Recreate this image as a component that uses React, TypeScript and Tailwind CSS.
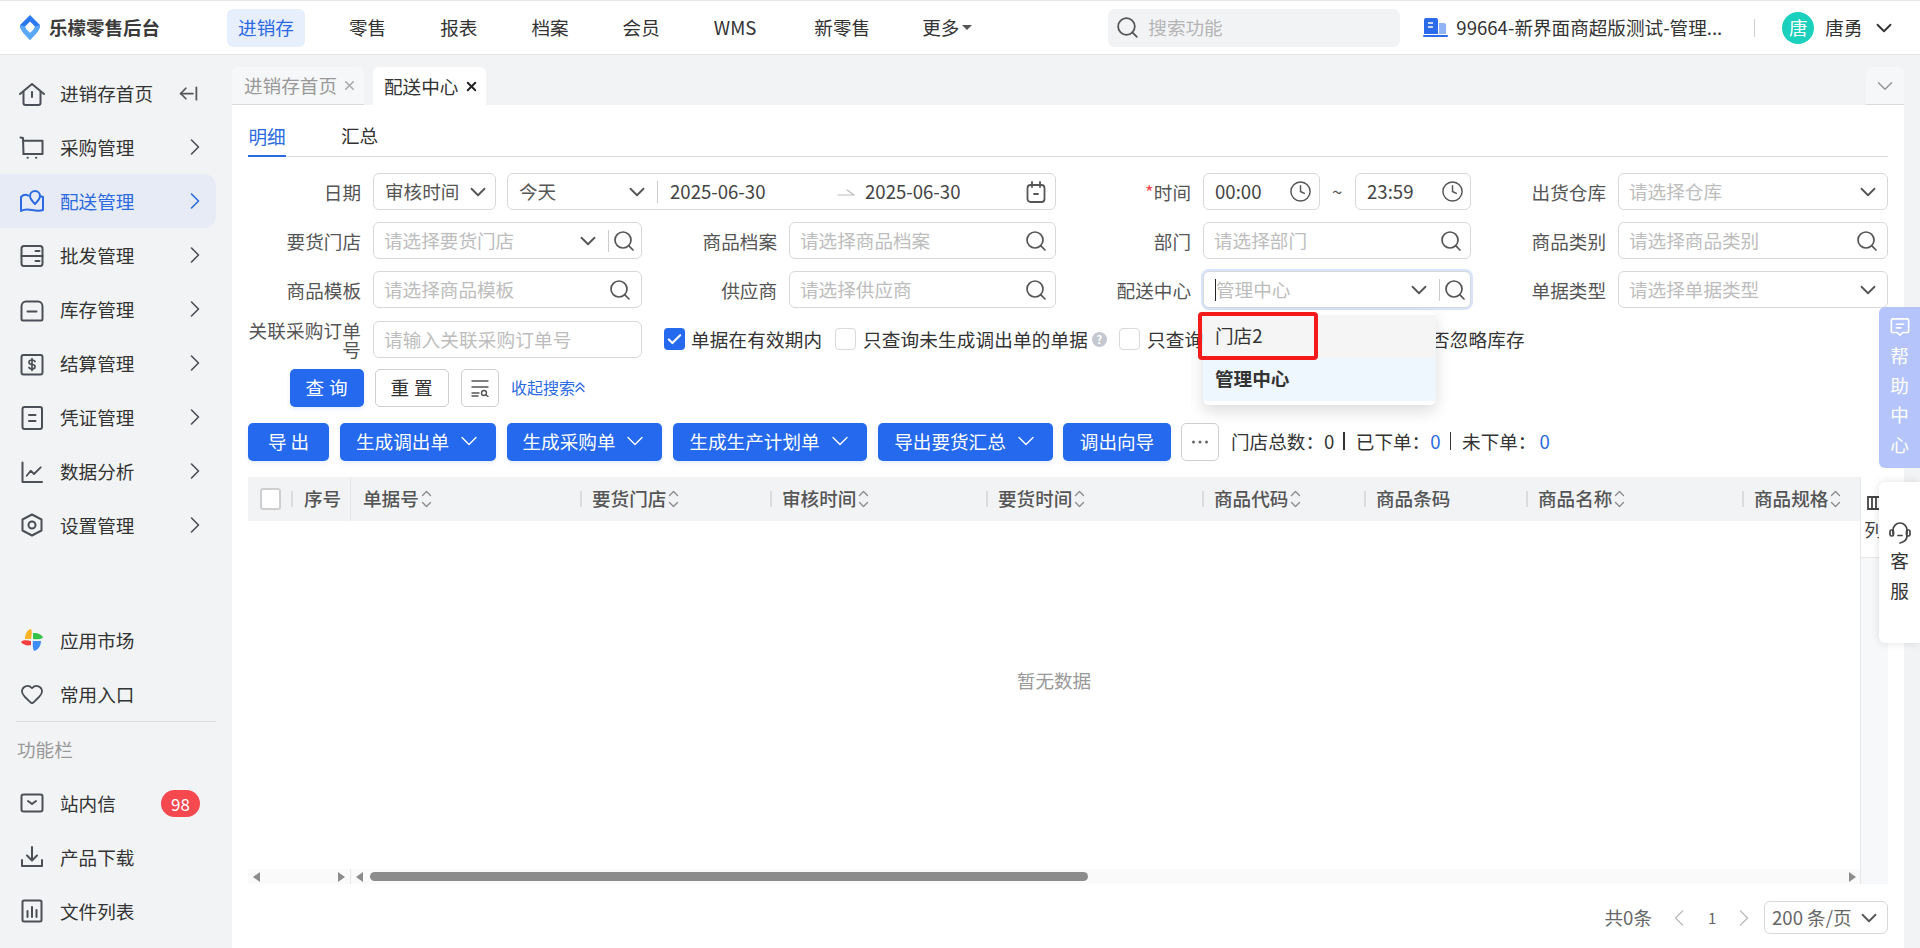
import {
  ArrowLeftFromLine,
  Check,
  ChevronDown,
  ChevronLeft,
  ChevronRight,
  Clock,
  Heart,
  Search,
  X,
} from "lucide-react";
import type { ReactNode } from "react";

const stroke = {
  fill: "none",
  stroke: "currentColor",
  strokeWidth: 2,
  strokeLinecap: "round" as const,
  strokeLinejoin: "round" as const,
};

function Ic({ children, className = "size-6 overflow-visible" }: { children: ReactNode; className?: string }) {
  return (
    <svg viewBox="0 0 24 24" className={className} {...stroke}>
      {children}
    </svg>
  );
}

const sideIcons: Record<string, ReactNode> = {
  home: (
    <Ic>
      <path d="M0 13 12 3l12 10" />
      <path d="M3.500 11v11a2 2 0 0 0 2 2h13a2 2 0 0 0 2-2V11" />
      <path d="M12 11v5" />
    </Ic>
  ),
  cart: (
    <Ic>
      <path d="m0.500 2.500 2.500.5 0.500 16" />
      <path d="M3 5.700h19.500V19H3.500" />
      <path d="M7.500 22.700h.3M16 22.700h.3" />
    </Ic>
  ),
  map: (
    <Ic>
      <path d="M8 6.500C5 5 3 6 1 8v14c3-2 6-2 11-1s8 1 11 0V8l-3-1" />
      <path d="M15 15c-3-3-5-5-5-8a5 5 0 0 1 10 0c0 3-2 5-5 8Z" />
    </Ic>
  ),
  wholesale: (
    <Ic>
      <rect x="1.500" y="3" width="21" height="20" rx="2.500" />
      <path d="M1.500 13h21M15.500 8h4M15.500 18h4" />
    </Ic>
  ),
  stock: (
    <Ic>
      <path d="M1.500 22V9.500c0-3 2-5 4.500-5h12c2.500 0 4.500 2 4.500 5V22a1.500 1.500 0 0 1-1.500 1.500H3A1.500 1.500 0 0 1 1.500 22Z" />
      <path d="M7.500 14.500h9" />
    </Ic>
  ),
  money: (
    <Ic>
      <rect x="1.500" y="4" width="21" height="19.500" rx="2" />
      <path d="M15 10.500c-.5-1-1.500-1.500-3-1.500-1.800 0-3 .8-3 2.300s1.200 2.200 3 2.200 3 .7 3 2.200-1.200 2.300-3 2.300c-1.500 0-2.500-.5-3-1.500M12 7.500v12" strokeWidth={1.700} />
    </Ic>
  ),
  voucher: (
    <Ic>
      <rect x="2.500" y="2" width="19.500" height="22" rx="2" />
      <path d="M9 10h6.500M9 16h6.500" />
    </Ic>
  ),
  chart: (
    <Ic>
      <path d="M2.500 3.500V23H22" />
      <path d="m6.700 16.700 4-5 3.300 3.300 6.700-6.700" strokeWidth={1.800} />
    </Ic>
  ),
  setting: (
    <Ic>
      <path d="M12 1.500 21.500 6.500v11L12 22.500 2.500 17.500v-11Z" />
      <circle cx="12" cy="12" r="3.500" />
    </Ic>
  ),
  mail: (
    <Ic>
      <rect x="1.500" y="3.500" width="21" height="17" rx="2" />
      <path d="m8 10 4 3 4-3" />
    </Ic>
  ),
  download: (
    <Ic>
      <path d="M12 2v13M7 10.500l5 5 5-5" />
      <path d="M2 15v6h20v-6" />
    </Ic>
  ),
  files: (
    <Ic>
      <rect x="2.500" y="1.500" width="19" height="21" rx="1.500" />
      <path d="M7.500 12v6M12 8v10M16.500 11v7" />
    </Ic>
  ),
};

function Pinwheel() {
  return (
    <svg viewBox="0 0 24 24" className="size-6">
      <path d="M11 11H5C5 6 7 2 11 1c1 2 1 6 0 10Z" fill="#fbb324" />
      <path d="M13 11V5c4-.5 9 1 10 5-3 1.500-7 1.500-10 1Z" fill="#35c24a" />
      <path d="M13 13h8c0 5-3 9-7 10-1.500-3-1.500-7-1-10Z" fill="#3d8ef7" />
      <path d="M11 13v4c-3 1-8 0-10-3 1-2 6-2 10-1Z" fill="#f5403f" />
    </svg>
  );
}

function Logo() {
  return (
    <svg viewBox="0 0 20 25" className="h-[25px] w-5">
      <path d="M10 0 20 10C20 16 14 20 10 25 6 20 0 16 0 10Z" fill="#2a78f2" />
      <path d="M0 10c0 6 6 10 10 15 4-5 10-9 10-15l-5 1.500C14 14.500 12 16 10 18c-2-2-4-3.500-5-6.500Z" fill="#5aa8f8" />
      <path d="M10 6.500 15 11.500C14 14.500 12 16 10 18 8 16 6 14.500 5 11.500Z" fill="#ffffff" />
    </svg>
  );
}

function SideItem({
  icon,
  label,
  active,
  chevron,
  children,
}: {
  icon: ReactNode;
  label: string;
  active?: boolean;
  chevron?: boolean;
  children?: ReactNode;
}) {
  return (
    <div
      className={[
        "flex h-[54px] w-[216px] items-center rounded-r-[12px] pl-5",
        active ? "bg-[#e6ebf5] text-[#2b6ae0]" : "text-[#4b4f56]",
      ].join(" ")}
    >
      <span className="flex w-10 shrink-0">{icon}</span>
      <span className={active ? "text-[#2b6ae0]" : "text-[#333]"}>{label}</span>
      {chevron ? <ChevronRight className="ml-auto mr-[7px] size-[28px]" strokeWidth={1.400} /> : null}
      {children}
    </div>
  );
}

function Box({
  className = "",
  children,
}: {
  className?: string;
  children: ReactNode;
}) {
  return (
    <div
      className={[
        "flex h-[37px] items-center rounded-[6px] border border-[#d6d8dc] bg-white",
        className,
      ].join(" ")}
    >
      {children}
    </div>
  );
}

function Ph({ children, className = "" }: { children: ReactNode; className?: string }) {
  return <span className={["pl-[10px] text-[#bdbdbd]", className].join(" ")}>{children}</span>;
}

function Label({ children }: { children: ReactNode }) {
  return (
    <div className="mr-3 w-[113px] shrink-0 text-right leading-[19px] text-[#555]">{children}</div>
  );
}

function SearchIcon({ className = "" }: { className?: string }) {
  return <Search className={["size-[24px] text-[#555]", className].join(" ")} strokeWidth={1.700} />;
}

function Down({ className = "" }: { className?: string }) {
  return <ChevronDown className={["size-[26px] text-[#555]", className].join(" ")} strokeWidth={1.700} />;
}

function TimeIcon() {
  return <Clock className="size-[23px] text-[#555]" strokeWidth={1.500} />;
}

function BtnDown() {
  return <ChevronDown className="size-[28px]" strokeWidth={1.200} />;
}

function Field({
  label,
  ml,
  children,
}: {
  label: ReactNode;
  ml?: string;
  children: ReactNode;
}) {
  return (
    <div className={["flex items-center", ml].join(" ")}>
      <Label>{label}</Label>
      {children}
    </div>
  );
}

function Btn({ className = "", children }: { className?: string; children: ReactNode }) {
  return (
    <div
      className={[
        "flex h-[38px] shrink-0 items-center justify-center rounded-[5px] bg-[#2469ee] pb-[2px] text-white shadow-[0_2px_4px_rgba(36,105,238,0.12)]",
        className,
      ].join(" ")}
    >
      {children}
    </div>
  );
}

function Tick({ checked }: { checked?: boolean }) {
  return checked ? (
    <span className="flex h-[22px] w-[21px] shrink-0 items-center justify-center rounded-[4px] bg-[#2469ee]">
      <Check className="size-[17px] text-white" strokeWidth={3} />
    </span>
  ) : (
    <span className="h-[22px] w-[21px] shrink-0 rounded-[4px] border border-[#d9d9d9] bg-white" />
  );
}

function Sort() {
  return (
    <svg viewBox="0 0 11 18" className="ml-[2px] h-[18px] w-[11px] text-[#8a8a8a]" {...stroke} strokeWidth={1.300}>
      <path d="m1.500 5.500 4-4 4 4M1.500 12.500l4 4 4-4" />
    </svg>
  );
}

const columns = [
  { label: "单据号", width: "w-[229px]", sort: true, first: true },
  { label: "要货门店", width: "w-[190px]", sort: true },
  { label: "审核时间", width: "w-[216px]", sort: true },
  { label: "要货时间", width: "w-[216px]", sort: true },
  { label: "商品代码", width: "w-[162px]", sort: true },
  { label: "商品条码", width: "w-[162px]", sort: false },
  { label: "商品名称", width: "w-[216px]", sort: true },
  { label: "商品规格", width: "w-[118px]", sort: true },
];

const nav = ["零售", "报表", "档案", "会员"];

const sideTop = [
  { key: "cart", label: "采购管理" },
  { key: "map", label: "配送管理", active: true },
  { key: "wholesale", label: "批发管理" },
  { key: "stock", label: "库存管理" },
  { key: "money", label: "结算管理" },
  { key: "voucher", label: "凭证管理" },
  { key: "chart", label: "数据分析" },
  { key: "setting", label: "设置管理" },
];

export default function App() {
  return (
    <div
      className="relative flex h-[948px] w-[1920px] flex-col overflow-hidden bg-[#f2f3f5] text-[18.600px] leading-none text-[#333]"
      style={{ fontFamily: '"Noto Sans CJK SC", "Noto Sans", sans-serif' }}
    >
      <header className="flex h-[55px] shrink-0 items-center border-y border-y-[#e3e4e6] border-t-[#e8e8e8] bg-white pl-5">
        <Logo />
        <span className="ml-[9px] w-[112px] whitespace-nowrap text-[18.500px] font-bold text-[#3a3a3a]">乐檬零售后台</span>
        <nav className="ml-[66px] flex items-center gap-[34px]">
          <span className="flex h-[38px] w-[78px] items-center justify-center rounded-[6px] bg-[#e8effc] text-[#2b6ae0]">进销存</span>
          {nav.map((item) => (
            <span key={item} className="mx-[10px]">{item}</span>
          ))}
          <span className="ml-[10px] mr-[14px]">WMS</span>
          <span className="mx-[10px]">新零售</span>
          <span className="ml-[8px] flex items-center">
            更多
            <span className="ml-[3px] h-0 w-0 border-x-[5px] border-t-[5px] border-x-transparent border-t-[#555]" />
          </span>
        </nav>
        <div className="ml-[136px] flex h-[38px] w-[292px] items-center rounded-[6px] bg-[#f2f3f5] pl-[7px]">
          <Search className="size-[25px] text-[#555]" strokeWidth={1.700} />
          <span className="ml-2 text-[#b5b5b5]">搜索功能</span>
        </div>
        <svg viewBox="0 0 25 19" className="ml-[23px] h-[19px] w-[25px]">
          <path d="M1 2a2 2 0 0 1 2-2h10a2 2 0 0 1 2 2v14H1Z" fill="#2b6ae8" />
          <path d="M5 5h5M5 9h5" stroke="#fff" strokeWidth="1.500" />
          <path d="M16 5h5a2 2 0 0 1 2 2v9h-7Z" fill="#8fb3f5" />
          <rect x="0" y="17" width="25" height="2" rx="1" fill="#2b6ae8" />
        </svg>
        <span className="ml-2 w-[268px] whitespace-nowrap">99664-新界面商超版测试-管理...</span>
        <span className="ml-[30px] h-[18px] w-px bg-[#ccc]" />
        <span className="ml-[27px] flex size-8 items-center justify-center rounded-full bg-[#1bd0bd] text-white">唐</span>
        <span className="ml-[11px]">唐勇</span>
        <ChevronDown className="ml-2 size-[26px] text-[#333]" strokeWidth={1.700} />
      </header>

      <div className="flex min-h-0 flex-1">
        <aside className="w-[232px] shrink-0 pt-[11px]">
          <SideItem icon={sideIcons.home} label="进销存首页">
            <ArrowLeftFromLine className="ml-[25px] size-[21px] text-[#555]" strokeWidth={2} />
          </SideItem>
          {sideTop.map((item) => (
            <SideItem key={item.key} icon={sideIcons[item.key]} label={item.label} active={item.active} chevron />
          ))}
          <div className="h-[61px]" />
          <SideItem icon={<Pinwheel />} label="应用市场" />
          <SideItem icon={<Heart className="size-6" strokeWidth={1.800} />} label="常用入口" />
          <div className="ml-4 h-px w-[200px] bg-[#d9dadc]" />
          <div className="flex h-[54px] items-center pl-[17px] text-[#999]">功能栏</div>
          <SideItem icon={sideIcons.mail} label="站内信">
            <span className="ml-auto mr-4 flex h-[27px] w-[39px] items-center justify-center rounded-full bg-[#f5484f] text-[17px] text-white">98</span>
          </SideItem>
          <SideItem icon={sideIcons.download} label="产品下载" />
          <SideItem icon={sideIcons.files} label="文件列表" />
        </aside>

        <main className="flex w-[1672px] flex-col">
          <div className="flex h-[50px] shrink-0 items-end">
            <div className="flex h-[38px] w-[132px] items-center rounded-t-[6px] border-b border-[#d9dadc] bg-[#f6f7f8] pl-3 text-[#999]">
              进销存首页
              <X className="ml-[5px] size-[15px] text-[#aaa]" strokeWidth={2.500} />
            </div>
            <div className="ml-[9px] flex h-[38px] w-[113px] items-center rounded-t-[6px] bg-white pl-[11px]">
              配送中心
              <X className="ml-[6px] size-[15px] text-[#222]" strokeWidth={3} />
            </div>
            <div className="ml-auto flex h-[38px] w-[38px] items-center justify-center rounded-t-[6px] border-b border-[#d9dadc] bg-[#f6f7f8]">
              <ChevronDown className="size-[26px] text-[#999]" strokeWidth={1.500} />
            </div>
          </div>

          <div className="flex min-h-0 flex-1 flex-col bg-white pl-4 pr-4">
            <div className="flex h-[52px] shrink-0 items-end border-b border-[#dddddd]">
              <span className="-mb-px flex h-[38px] w-[38px] items-start justify-center whitespace-nowrap border-b-2 border-[#2b6ae0] pt-[8px] text-[#2b6ae0]">明细</span>
              <span className="ml-[55px] flex h-[38px] items-start whitespace-nowrap pt-[8px]">汇总</span>
            </div>

            <div className="mt-4 flex flex-col gap-3">
              <div className="flex">
                <Field label="日期">
                  <Box className="w-[123px] justify-between pl-[11px] pr-1">
                    <span className="whitespace-nowrap text-[#555]">审核时间</span>
                    <Down />
                  </Box>
                </Field>
                <Box className="ml-[11px] w-[549px] pl-[11px]">
                  <span className="w-[105px] text-[#555]">今天</span>
                  <Down />
                  <span className="ml-[7px] h-[22px] w-px bg-[#ccc]" />
                  <span className="ml-3 w-[96px] text-[#444]">2025-06-30</span>
                  <svg viewBox="0 0 18 8" className="ml-[71px] h-2 w-[18px] text-[#bbb]" {...stroke} strokeWidth={1.200}>
                    <path d="M1 7h16L10 2" />
                  </svg>
                  <span className="ml-[10px] w-[96px] text-[#444]">2025-06-30</span>
                  <svg viewBox="0 0 20 22" className="ml-[65px] h-[22px] w-5 text-[#555]" {...stroke} strokeWidth={1.800}>
                    <rect x="1.500" y="4" width="17" height="17" rx="3" />
                    <path d="M6 1v5M14 1v5M8 13h4" />
                  </svg>
                </Box>
                <Field label={<><span className="text-[#f5484f]">*</span>时间</>} ml="ml-[22px]">
                  <Box className="w-[117px] pl-[11px]">
                    <span className="w-[74px] text-[#444]">00:00</span>
                    <TimeIcon />
                  </Box>
                </Field>
                <span className="mx-3 flex w-[11px] items-center text-[#555]">~</span>
                <Box className="w-[116px] pl-[11px]">
                  <span className="w-[74px] text-[#444]">23:59</span>
                  <TimeIcon />
                </Box>
                <Field label="出货仓库" ml="ml-[22px]">
                  <Box className="w-[270px] justify-between pr-[6px]">
                    <Ph>请选择仓库</Ph>
                    <Down />
                  </Box>
                </Field>
              </div>

              <div className="flex">
                <Field label="要货门店">
                  <Box className="w-[269px] pr-[5px]">
                    <Ph>请选择要货门店</Ph>
                    <Down className="ml-auto" />
                    <span className="ml-[7px] h-[22px] w-px bg-[#ccc]" />
                    <SearchIcon className="ml-[3px]" />
                  </Box>
                </Field>
                <Field label="商品档案" ml="ml-[22px]">
                  <Box className="w-[267px] justify-between pr-[7px]">
                    <Ph>请选择商品档案</Ph>
                    <SearchIcon />
                  </Box>
                </Field>
                <Field label="部门" ml="ml-[22px]">
                  <Box className="w-[268px] justify-between pr-[7px]">
                    <Ph>请选择部门</Ph>
                    <SearchIcon />
                  </Box>
                </Field>
                <Field label="商品类别" ml="ml-[22px]">
                  <Box className="w-[270px] justify-between pr-[8px]">
                    <Ph>请选择商品类别</Ph>
                    <SearchIcon />
                  </Box>
                </Field>
              </div>

              <div className="flex">
                <Field label="商品模板">
                  <Box className="w-[269px] justify-between pr-[9px]">
                    <Ph>请选择商品模板</Ph>
                    <SearchIcon />
                  </Box>
                </Field>
                <Field label="供应商" ml="ml-[22px]">
                  <Box className="w-[267px] justify-between pr-[7px]">
                    <Ph>请选择供应商</Ph>
                    <SearchIcon />
                  </Box>
                </Field>
                <Field label="配送中心" ml="ml-[22px]">
                  <Box className="w-[268px] border-[#2469ee] pr-[3px] shadow-[0_0_0_2px_rgba(36,105,238,0.18)]">
                    <span className="ml-[11px] h-[22px] w-px bg-[#222]" />
                    <span className="text-[#bdbdbd]">管理中心</span>
                    <Down className="ml-auto" />
                    <span className="ml-[7px] h-[22px] w-px bg-[#ccc]" />
                    <SearchIcon className="ml-[3px]" />
                  </Box>
                </Field>
                <Field label="单据类型" ml="ml-[22px]">
                  <Box className="w-[270px] justify-between pr-[6px]">
                    <Ph>请选择单据类型</Ph>
                    <Down />
                  </Box>
                </Field>
              </div>

              <div className="flex items-center tracking-[0.15px]">
                <Field label={<>关联采购订单<br />号</>}>
                  <Box className="w-[269px]">
                    <Ph>请输入关联采购订单号</Ph>
                  </Box>
                </Field>
                <span className="ml-[22px] flex items-center">
                  <Tick checked />
                  <span className="ml-[6px] w-[132px] whitespace-nowrap">单据在有效期内</span>
                </span>
                <span className="ml-3 flex items-center">
                  <Tick />
                  <span className="ml-[7px] w-[225px] whitespace-nowrap">只查询未生成调出单的单据</span>
                  <span className="ml-1 flex size-[15px] items-center justify-center rounded-full bg-[#c3c7d0] text-[11px] font-bold text-white">?</span>
                </span>
                <span className="ml-3 flex items-center">
                  <Tick />
                  <span className="ml-[7px] w-[239px] whitespace-nowrap">只查询</span>
                </span>
                <span className="ml-[45px] whitespace-nowrap">否忽略库存</span>
              </div>
            </div>

            <div className="mt-[11px] flex items-center pl-[42px]">
              <Btn className="w-[74px] pl-[4px] tracking-[5px]">查询</Btn>
              <div className="ml-[11px] flex h-[38px] w-[74px] items-center justify-center rounded-[5px] border border-[#cfcfcf] pb-[2px] pl-[4px] tracking-[5px]">重置</div>
              <div className="ml-3 flex h-[38px] w-[38px] items-center justify-center rounded-[5px] border border-[#cfcfcf] text-[#555]">
                <svg viewBox="0 0 18 18" className="size-[18px]" {...stroke} strokeWidth={1.400}>
                  <path d="M1 2h16M1 8h16M1 14h7M1 17h6" />
                  <circle cx="13" cy="14" r="2.500" />
                  <path d="m15 16 2 1.500" />
                </svg>
              </div>
              <span className="ml-3 flex items-center whitespace-nowrap pb-[2px] text-[16px] text-[#2b6ae0]">
                收起搜索
                <svg viewBox="0 0 10 12" className="h-3 w-[10px]" {...stroke} strokeWidth={1.300}>
                  <path d="m1 6 4-4 4 4M1 10.500l4-4 4 4" />
                </svg>
              </span>
            </div>

            <div className="mt-4 flex items-center">
              <Btn className="w-[81px] pl-[4px] tracking-[4px]">导出</Btn>
              <Btn className="ml-[11px] w-[156px] gap-[6px] pl-[3px]">生成调出单<BtnDown /></Btn>
              <Btn className="ml-[11px] w-[155px] gap-[6px] pl-[3px]">生成采购单<BtnDown /></Btn>
              <Btn className="ml-[11px] w-[194px] gap-[6px] pl-[3px]">生成生产计划单<BtnDown /></Btn>
              <Btn className="ml-[11px] w-[175px] gap-[6px] pl-[3px]">导出要货汇总<BtnDown /></Btn>
              <Btn className="ml-[10px] w-[108px]">调出向导</Btn>
              <div className="ml-[10px] flex h-[38px] w-[38px] items-center justify-center rounded-[5px] border border-[#cfcfcf] text-[#666]">
                <svg viewBox="0 0 18 4" className="h-1 w-[18px]" fill="currentColor">
                  <circle cx="2.500" cy="2" r="1.500" />
                  <circle cx="9" cy="2" r="1.500" />
                  <circle cx="15.500" cy="2" r="1.500" />
                </svg>
              </div>
              <span className="ml-3 flex items-center whitespace-nowrap pb-[2px]">
                门店总数：<span>0</span>
                <span className="ml-[9px] mr-[11px] h-[18px] w-[1.500px] bg-[#333]" />
                已下单：<span className="text-[#2b6ae0]">0</span>
                <span className="ml-[9px] mr-[11px] h-[18px] w-[1.500px] bg-[#333]" />
                未下单：<span className="ml-[3px] text-[#2b6ae0]">0</span>
              </span>
            </div>

            <div className="mt-4 flex h-[407px] shrink-0">
              <div className="flex w-[1612px] flex-col">
                <div className="flex h-11 shrink-0 items-center bg-[#f2f3f5] font-medium text-[#555]">
                  <div className="flex h-full w-[103px] items-center border-r border-[#e6e7e9] pl-3">
                    <span className="h-[22px] w-[21px] rounded-[3px] border-2 border-[#cfcfcf] bg-white" />
                    <span className="ml-[10px] h-4 w-[2px] bg-[#dcdcdc]" />
                    <span className="ml-[11px] whitespace-nowrap pb-[2px]">序号</span>
                  </div>
                  {columns.map((col) => (
                    <div key={col.label} className={["relative flex h-full items-center pl-3", col.width].join(" ")}>
                      {col.first ? null : <span className="absolute left-0 h-4 w-[2px] bg-[#dcdcdc]" />}
                      <span className="whitespace-nowrap pb-[2px]">{col.label}</span>
                      {col.sort ? <Sort /> : null}
                    </div>
                  ))}
                </div>
                <div className="flex flex-1 items-center justify-center pb-[30px] text-[#999]">暂无数据</div>
                <div className="flex h-[15px] shrink-0 bg-[#fafafa] text-[#8c8c8c]">
                  <div className="flex w-[103px] items-center justify-between border-r border-[#e6e7e9] pl-[5px] pr-[5px]">
                    <span className="h-0 w-0 border-y-[5px] border-r-[7px] border-y-transparent border-r-current" />
                    <span className="h-0 w-0 border-y-[5px] border-l-[7px] border-y-transparent border-l-current" />
                  </div>
                  <div className="flex flex-1 items-center pl-[5px] pr-[4px]">
                    <span className="h-0 w-0 border-y-[5px] border-r-[7px] border-y-transparent border-r-current" />
                    <span className="ml-[7px] h-[9px] w-[718px] rounded-full bg-current" />
                    <span className="ml-auto h-0 w-0 border-y-[5px] border-l-[7px] border-y-transparent border-l-current" />
                  </div>
                </div>
              </div>
              <div className="flex w-[28px] flex-col border-l border-[#e6e7e9] bg-[#f7f8fa]">
                <div className="flex h-[81px] flex-col items-center gap-[10px] border-b border-[#e6e7e9] bg-white pr-[2px] pt-[19px] text-[#444]">
                  <svg viewBox="0 0 14 14" className="size-[14px]" fill="none" stroke="currentColor" strokeWidth={1.800}>
                    <path d="M1 1h12v12H1ZM5 1v12M9 1v12" />
                  </svg>
                  <span>列</span>
                </div>
              </div>
            </div>

            <div className="flex flex-1 items-start justify-end pt-[17px]">
              <div className="flex h-[33px] items-center text-[#666]">
                <span className="whitespace-nowrap">共0条</span>
                <ChevronLeft className="ml-[13px] size-[28px] text-[#bbb]" strokeWidth={1.200} />
                <span className="ml-[15px] w-[8px] text-[15px]">1</span>
                <ChevronRight className="ml-[14px] size-[28px] text-[#bbb]" strokeWidth={1.200} />
                <div className="ml-[6px] flex h-[33px] w-[124px] items-center rounded-[6px] border border-[#d6d8dc] pl-[7px]">
                  <span className="whitespace-nowrap">200 条/页</span>
                  <ChevronDown className="ml-auto mr-[5px] size-[26px] text-[#555]" strokeWidth={1.700} />
                </div>
              </div>
            </div>
          </div>
        </main>
      </div>

      <div className="absolute left-[1203px] top-[311px] w-[233px] overflow-hidden rounded-[6px] bg-white py-[4px] shadow-[0_6px_16px_rgba(0,0,0,0.14)]">
        <div className="flex h-[43px] items-center bg-[#f5f5f5] pb-[2px] pl-3">门店2</div>
        <div className="flex h-[43px] items-center bg-[#eef6fe] pb-[2px] pl-3 font-bold">管理中心</div>
      </div>
      <div className="absolute left-[1198px] top-[312px] h-[48px] w-[120px] rounded-[4px] border-[4px] border-[#f51a1a]" />

      <div className="absolute left-[1879px] top-[307px] flex h-[161px] w-[41px] flex-col items-center rounded-l-[6px] bg-[#b5c5fb] pt-[10px] text-white">
        <svg viewBox="0 0 22 22" className="mb-[9px] size-[20px]" {...stroke} strokeWidth={1.800}>
          <path d="M3 2h16a1.500 1.500 0 0 1 1.500 1.500v12a1.500 1.500 0 0 1-1.500 1.500h-5l-3 3-3-3H3a1.500 1.500 0 0 1-1.500-1.500v-12A1.500 1.500 0 0 1 3 2Z" />
          <path d="M7 8h8M7 12h5" />
        </svg>
        <span className="flex flex-col gap-[11px]">
          <span>帮</span>
          <span>助</span>
          <span>中</span>
          <span>心</span>
        </span>
      </div>
      <div className="absolute left-[1879px] top-[482px] flex h-[161px] w-[41px] flex-col items-center rounded-l-[6px] bg-white pt-[39px] shadow-[0_0_8px_rgba(0,0,0,0.12)]">
        <svg viewBox="0 0 22 24" className="mb-[6px] h-6 w-[22px] text-[#444]" {...stroke} strokeWidth={1.700}>
          <path d="M4 13V9a7 7 0 0 1 14 0v4" />
          <rect x="1" y="9" width="3.500" height="6" rx="1.500" />
          <rect x="17.500" y="9" width="3.500" height="6" rx="1.500" />
          <path d="M18 15c0 4-3 6-7 7M9 14.500h4" />
        </svg>
        <span className="flex flex-col gap-[11px]">
          <span>客</span>
          <span>服</span>
        </span>
      </div>
    </div>
  );
}
